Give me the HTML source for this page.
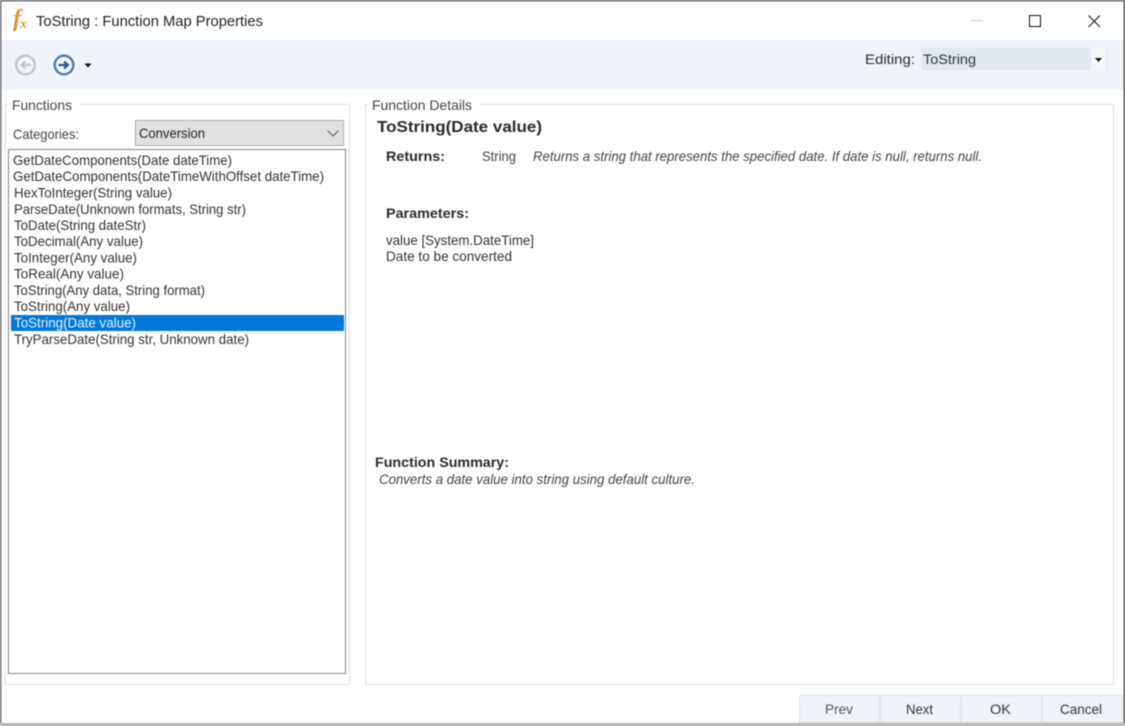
<!DOCTYPE html>
<html><head><meta charset="utf-8"><style>
html,body{margin:0;padding:0;width:1125px;height:726px;overflow:hidden;background:#fff}
svg{display:block;filter:blur(0.45px)}
text{font-family:"Liberation Sans",sans-serif;font-size:14px;fill:#2a2a2a}
.l text{fill:#333}
</style></head><body>
<svg width="1125" height="726" viewBox="0 0 1125 726" xmlns="http://www.w3.org/2000/svg">
<rect width="1125" height="726" fill="#fff"/>
<rect x="0" y="0" width="1125" height="1.5" fill="#6a6a6a"/>
<rect x="0" y="0" width="1.5" height="724" fill="#707070"/>
<rect x="1123.5" y="0" width="1.5" height="724" fill="#555"/>
<rect x="0" y="723" width="1125" height="3" fill="#b4b6b4"/>
<!-- title bar -->
<text x="13" y="26" style="font-family:'Liberation Serif',serif;font-style:italic;font-weight:bold;font-size:24px;fill:#e0913c">f</text>
<text x="20" y="28" style="font-family:'Liberation Serif',serif;font-style:italic;font-weight:bold;font-size:14px;fill:#e0913c">x</text>
<text x="36" y="26" textLength="227" lengthAdjust="spacingAndGlyphs" style="font-size:15px;fill:#222">ToString : Function Map Properties</text>
<rect x="971" y="20" width="12" height="1" fill="#c8c8c8"/>
<rect x="1029.5" y="15.5" width="11" height="11" fill="none" stroke="#111" stroke-width="1"/>
<path d="M1088.5 15.5L1100 27M1100 15.5L1088.5 27" stroke="#111" stroke-width="1" fill="none"/>
<!-- toolbar -->
<rect x="1.5" y="40" width="1122" height="50" fill="#f0f4f8"/>
<circle cx="25.5" cy="65" r="9.3" fill="#f3f5f7" stroke="#c2c4c6" stroke-width="2.4"/>
<path d="M31 65H22M25.500 61.500L21.500 65L25.500 68.500" fill="none" stroke="#c4c6c8" stroke-width="2.2"/>
<circle cx="64" cy="65" r="9.3" fill="#f3f7fb" stroke="#4a7ab0" stroke-width="2.4"/>
<path d="M58.500 65H67.500M64 61.500L68 65L64 68.500" fill="none" stroke="#2a5a96" stroke-width="2.2"/>
<path d="M84.500 63.500H91.500L88 67.500Z" fill="#111"/>
<text x="865" y="64" textLength="50" lengthAdjust="spacingAndGlyphs">Editing:</text>
<rect x="921" y="48" width="186" height="22" fill="#e1e8f0"/>
<rect x="1091" y="48" width="15" height="22" fill="#f4f7fa"/>
<path d="M1095 58H1102L1098.500 62Z" fill="#111"/>
<text x="923" y="64" textLength="53" lengthAdjust="spacingAndGlyphs" style="fill:#333">ToString</text>
<!-- groups -->
<rect x="5.500" y="104.500" width="344" height="580" fill="none" stroke="#dfdfe6"/>
<rect x="8" y="98" width="72" height="14" fill="#fff"/>
<text x="12" y="110" textLength="60" lengthAdjust="spacingAndGlyphs" style="fill:#444">Functions</text>
<rect x="365.500" y="104.500" width="748" height="580" fill="none" stroke="#dfdfe6"/>
<rect x="368" y="98" width="112" height="14" fill="#fff"/>
<text x="372" y="110" textLength="100" lengthAdjust="spacingAndGlyphs" style="fill:#444">Function Details</text>
<!-- combo -->
<text x="13" y="139" textLength="66" lengthAdjust="spacingAndGlyphs" style="fill:#444">Categories:</text>
<rect x="135.500" y="120.500" width="208" height="25" fill="#e1e1e1" stroke="#adadad"/>
<text x="139" y="138" textLength="66" lengthAdjust="spacingAndGlyphs" style="fill:#222">Conversion</text>
<path d="M327.500 130.500L333 136L338.500 130.500" fill="none" stroke="#555" stroke-width="1"/>
<!-- list -->
<rect x="8.500" y="149.500" width="337" height="524" fill="#fff" stroke="#82838a"/>
<rect x="11" y="315" width="333" height="16" fill="#0078d7"/>
<g class="l">
<text x="13" y="165" textLength="219" lengthAdjust="spacingAndGlyphs">GetDateComponents(Date dateTime)</text>
<text x="13" y="181" textLength="311" lengthAdjust="spacingAndGlyphs">GetDateComponents(DateTimeWithOffset dateTime)</text>
<text x="14" y="197.500" textLength="158" lengthAdjust="spacingAndGlyphs">HexToInteger(String value)</text>
<text x="14" y="214" textLength="232" lengthAdjust="spacingAndGlyphs">ParseDate(Unknown formats, String str)</text>
<text x="14" y="230" textLength="132" lengthAdjust="spacingAndGlyphs">ToDate(String dateStr)</text>
<text x="14" y="246" textLength="129" lengthAdjust="spacingAndGlyphs">ToDecimal(Any value)</text>
<text x="14" y="262.500" textLength="123" lengthAdjust="spacingAndGlyphs">ToInteger(Any value)</text>
<text x="14" y="278.500" textLength="110" lengthAdjust="spacingAndGlyphs">ToReal(Any value)</text>
<text x="14" y="295" textLength="191" lengthAdjust="spacingAndGlyphs">ToString(Any data, String format)</text>
<text x="14" y="311" textLength="116" lengthAdjust="spacingAndGlyphs">ToString(Any value)</text>
<text x="14" y="327.500" textLength="122" lengthAdjust="spacingAndGlyphs" style="fill:#e8f2fb">ToString(Date value)</text>
<text x="14" y="344" textLength="235" lengthAdjust="spacingAndGlyphs">TryParseDate(String str, Unknown date)</text>
</g>
<!-- details -->
<text x="377" y="132" textLength="165" lengthAdjust="spacingAndGlyphs" style="font-weight:bold;font-size:15.5px">ToString(Date value)</text>
<text x="386" y="161" textLength="59" lengthAdjust="spacingAndGlyphs" style="font-weight:bold">Returns:</text>
<text x="482" y="161" textLength="34" lengthAdjust="spacingAndGlyphs" style="fill:#444">String</text>
<text x="533" y="161" textLength="449" lengthAdjust="spacingAndGlyphs" style="font-style:italic;fill:#444">Returns a string that represents the specified date. If date is null, returns null.</text>
<text x="386" y="218" textLength="83" lengthAdjust="spacingAndGlyphs" style="font-weight:bold">Parameters:</text>
<text x="386" y="245" textLength="148" lengthAdjust="spacingAndGlyphs" style="fill:#333">value [System.DateTime]</text>
<text x="386" y="261" textLength="126" lengthAdjust="spacingAndGlyphs" style="fill:#333">Date to be converted</text>
<text x="375" y="467" textLength="134" lengthAdjust="spacingAndGlyphs" style="font-weight:bold">Function Summary:</text>
<text x="379" y="484" textLength="316" lengthAdjust="spacingAndGlyphs" style="font-style:italic;fill:#444">Converts a date value into string using default culture.</text>
<!-- buttons -->
<rect x="799.500" y="695.500" width="80" height="27" fill="#f0f4f8" stroke="#dfe3e8"/>
<rect x="880.500" y="695.500" width="80" height="27" fill="#f0f4f8" stroke="#dfe3e8"/>
<rect x="961.500" y="695.500" width="80" height="27" fill="#f0f4f8" stroke="#dfe3e8"/>
<rect x="1042.500" y="695.500" width="80" height="27" fill="#f0f4f8" stroke="#dfe3e8"/>
<text x="825" y="714" textLength="28" lengthAdjust="spacingAndGlyphs" style="fill:#555">Prev</text>
<text x="906" y="714" textLength="27" lengthAdjust="spacingAndGlyphs" style="fill:#333">Next</text>
<text x="990" y="714" textLength="21" lengthAdjust="spacingAndGlyphs" style="fill:#333">OK</text>
<text x="1060" y="714" textLength="42" lengthAdjust="spacingAndGlyphs" style="fill:#333">Cancel</text>
</svg>
</body></html>
